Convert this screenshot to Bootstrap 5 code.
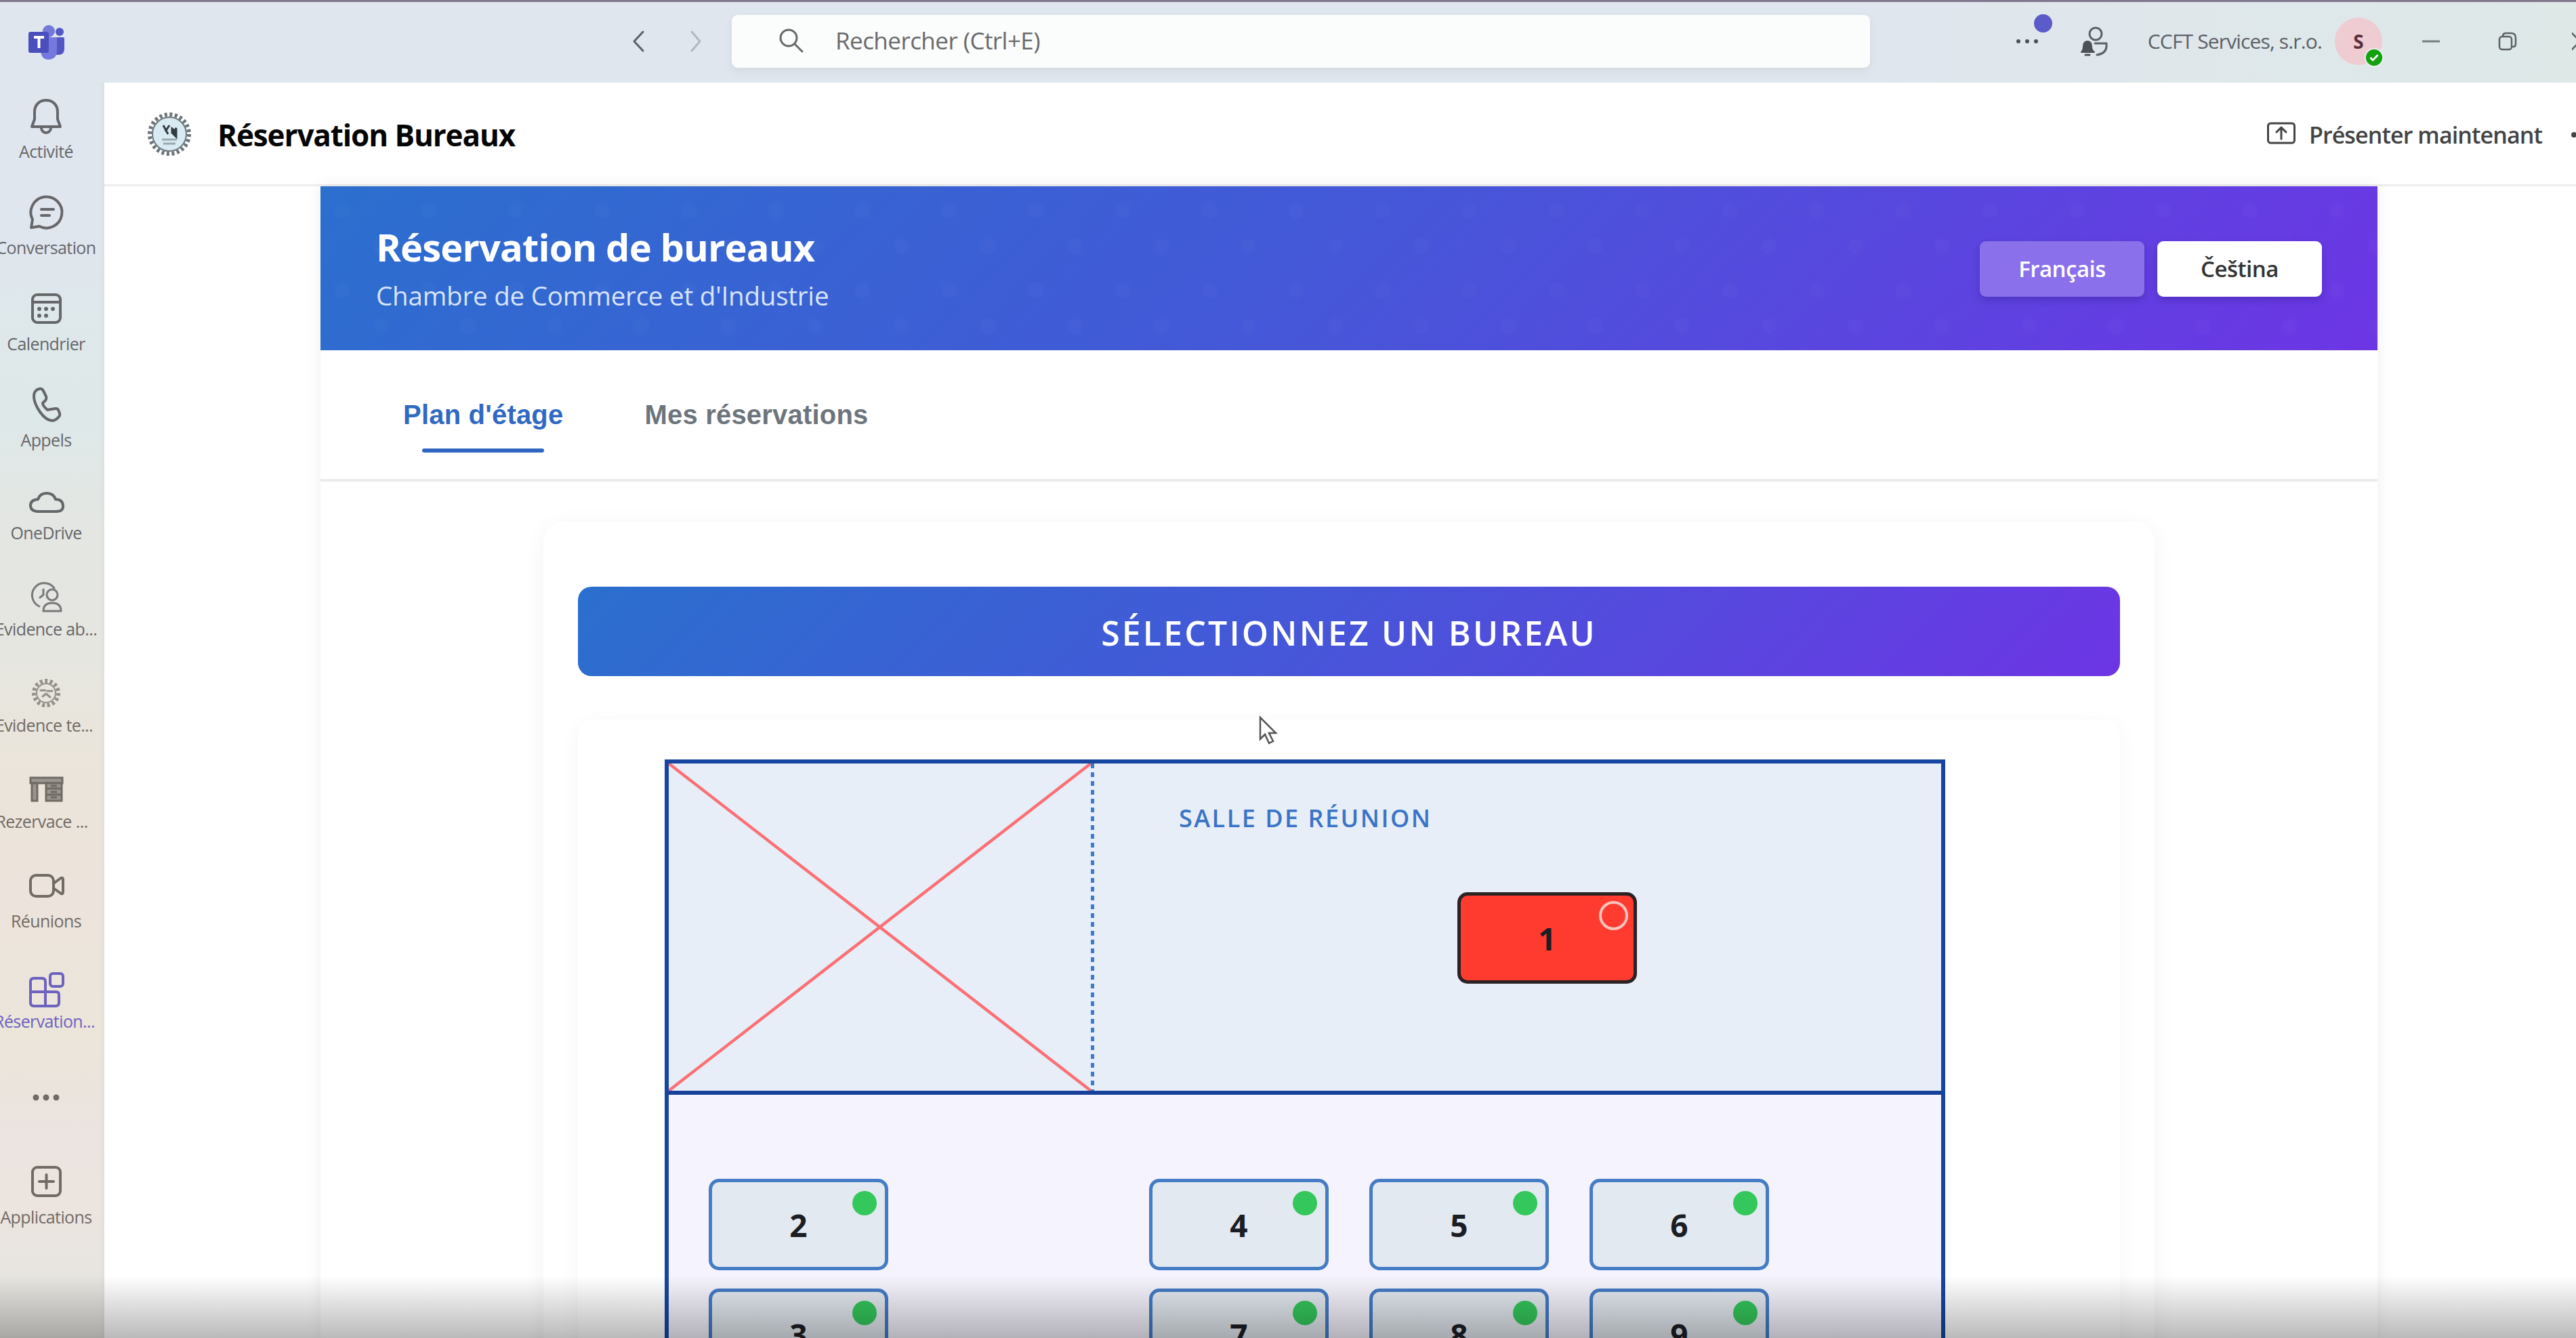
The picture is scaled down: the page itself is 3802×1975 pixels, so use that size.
<!DOCTYPE html>
<html lang="fr">
<head>
<meta charset="utf-8">
<meta name="viewport" content="width=device-width, initial-scale=1">
<title>Réservation Bureaux</title>
<link href="https://cdn.jsdelivr.net/npm/bootstrap@5.3.0/dist/css/bootstrap.min.css" rel="stylesheet">
<style>
body{font-family:"Open Sans","Noto Sans",sans-serif;color:#242424;background:#fff}
.shell{width:3802px;height:1975px}
svg{display:block;flex:none}
.ico{fill:none;stroke:currentColor;stroke-width:4;stroke-linecap:round;stroke-linejoin:round}
/* title bar */
.titlebar{height:122px;padding:0 0 4px 38px;border-top:3px solid #83798f;background:linear-gradient(90deg,#dfe6ee 0,#dfe6ee 70%,#dfe7eb 85%,#dde8e7 100%);color:#5c6066}
.searchbox{width:1680px;height:78px;margin-left:42px;padding-left:66px;border-radius:9px;background:#fbfcfc;box-shadow:0 5px 12px rgba(120,120,120,.12);color:#6a6a6a;font-size:35px;letter-spacing:-.55px}
.tenant{font-size:30px;letter-spacing:-.85px;white-space:nowrap}
.avatar-s{width:70px;height:70px;background:#eeccd2;color:#5a2f3a;font-size:28px;font-weight:700}
.presence{right:-2px;bottom:-3px}
.notif{width:27px;height:27px;background:#5b5bc9;left:27px;top:-36px}
/* app rail */
.rail{width:154px;padding-right:18px;background:linear-gradient(180deg,#dfe6ee 0,#dfe6ed 13%,#dee8ea 20%,#dfe8e8 28%,#e3e6e2 35%,#e6e6e0 46%,#ebe4da 55%,#ece4dc 66%,#ebe5da 76%,#ebe3df 83%,#ebe4df 90%,#e7e5e0 95%);color:#66676a;box-shadow:inset -4px 0 5px rgba(0,0,0,.025)}
.rail-item{height:142px;padding-top:19px}
.rail-item span{font-size:25px;line-height:30px;letter-spacing:-.6px;margin-top:7px;white-space:nowrap}
.rail-item.snug span{margin-top:2px}
.warm{color:#716b66}
.rail-item.current{color:#6d62c0;padding-top:31px;height:180px}
.rail-item.current span{margin:1px 5px 0 0}
.rail-more{height:80px}
.rail-item.apps{padding-top:54px;height:200px}
/* app header */
.apphead{height:153px;padding:4px 0 0 63px;border-bottom:3px solid #ededed}
.apphead h1{font-size:44px;font-weight:700;letter-spacing:-1.1px;margin:0 0 0 38px;color:#050505}
.present{font-size:34px;font-weight:600;letter-spacing:-.9px;color:#444;margin-left:19px;white-space:nowrap}
/* booking page */
.page{width:3036px;margin-left:319px;height:1700px;box-shadow:0 0 22px rgba(0,0,0,.07)}
.grad{background-image:linear-gradient(135deg,#2b6fce 0%,#4458d8 45%,#6d35e5 100%)}
.hero{height:242px;padding:0 82px 0 82px;background-image:radial-gradient(circle at 25% 30%,rgba(255,255,255,.02) 0 9px,transparent 14px),radial-gradient(circle at 70% 75%,rgba(255,255,255,.018) 0 9px,transparent 14px),linear-gradient(135deg,#2b6fce 0%,#4458d8 48%,#6d35e5 100%);background-size:128px 118px,128px 118px,auto}
.hero h2{font-size:56px;line-height:76px;font-weight:700;letter-spacing:-.87px;margin:0}
.hero p{font-size:38.5px;line-height:52px;letter-spacing:-.2px;margin:8px 0 0;color:#d8e4fa}
.langs{gap:19px;margin-top:2px}
.lang{width:243px;height:82px;border-radius:9px;border:0;font-size:33px;font-weight:600;letter-spacing:-.5px;padding:0;box-shadow:0 5px 12px rgba(20,10,80,.22)}
.lang-on,.lang-on:hover{background:#8a70ea;color:#fff}
.lang-off,.lang-off:hover{background:#fff;color:#333}
.tabsbar{height:194px;border-bottom:4px solid #e9ebed;padding:55px 0 0 122px;font-family:"Liberation Sans",Arial,sans-serif;font-size:40px;font-weight:700}
.tabsbar .tb{line-height:80px;height:102px;color:#6c757d;margin-right:120px;letter-spacing:.2px}
.tabsbar .tb.on{color:#3069c4}
.tb.on::after{content:"";display:block;width:180px;height:6px;margin:10px auto 0;border-radius:3px;background:#2f66c2}
.panel{width:2378px;margin:59px 0 0 329px;height:1400px;padding:96px 51px 0;border-radius:30px;box-shadow:0 6px 34px rgba(0,0,0,.05)}
.pick{height:132px;padding-top:4px;border-radius:20px;font-size:50px;font-weight:600;letter-spacing:3.15px}
.planwrap{margin-top:64px;height:1200px;border-radius:24px;padding:59px 0 0 128px;box-shadow:0 6px 30px rgba(0,0,0,.045)}
.plan{width:1890px;border:6px solid #1746a0;background:#f5f3fd;height:1100px}
.rooms{height:489px;background:#e7eef8;border-bottom:6px solid #16409a}
.void{width:623px}
.divider{width:5px;background:repeating-linear-gradient(180deg,#3d7cc9 0 7px,transparent 7px 13px)}
.meeting{padding:57px 0 0 125px}
.meeting h3{font-size:36px;line-height:48px;font-weight:600;letter-spacing:2.5px;color:#3a74c6;margin:0}
.seats{display:grid;grid-template-columns:repeat(5,265px);column-gap:60px;row-gap:27px;padding:124px 0 0 59px}
.seat{width:265px;height:135px;border:5px solid #447cc5;border-radius:15px;background:#e3e9f0;font-size:46px;font-weight:700;color:#1b1e25;line-height:1}
.seat i{position:absolute;width:36px;height:36px;border-radius:50%;background:#34c75b;right:12px;top:13px}
.seat.taken{background:#ff3b30;border-color:#2b2223;margin:85px 0 0 411px}
.seat.taken i{width:43px;height:43px;right:8px;top:8px;background:none;border:4px solid #ffc4bd}
.c3{grid-column:3}
.shade{left:0;right:0;bottom:0;height:92px;background:linear-gradient(180deg,rgba(0,0,0,0),rgba(0,0,0,.27));pointer-events:none}
.pointer{left:1858px;top:1056px}
</style>
<script src="https://cdn.jsdelivr.net/npm/bootstrap@5.3.0/dist/js/bootstrap.bundle.min.js"></script>
</head>
<body class="overflow-hidden">
<div class="shell d-flex flex-column position-relative overflow-hidden">

  <header class="titlebar d-flex align-items-center flex-shrink-0">
    <svg width="60" height="60" viewBox="0 0 60 60">
      <circle cx="34" cy="15" r="9" fill="#7478d8"/><circle cx="50" cy="16" r="6" fill="#5257c4"/>
      <path d="M42 24h13q2 0 2 2v15q0 9-9 9h-6z" fill="#5257c4"/>
      <path d="M22 24h24v20q0 12-12 13q-11 0-12-13z" fill="#7479dd"/>
      <rect x="4" y="16" width="30" height="31" rx="3" fill="#4a4fbc"/>
      <path d="M12 24h15M19.500 24v16" stroke="#fff" stroke-width="4" fill="none"/>
    </svg>
    <svg class="ico" width="114" height="60" viewBox="0 0 114 60" style="margin-left:826px"><path d="M25 16L12 30l13 14" stroke-width="3"/><path d="M97 16l12 14-12 14" stroke="#b1b8be" stroke-width="3"/></svg>
    <div class="searchbox d-flex align-items-center">
      <svg class="ico" width="46" height="44" viewBox="0 0 46 44"><circle cx="18" cy="17" r="12" stroke-width="3"/><path d="M27 26l11 11" stroke-width="3"/></svg>
      <span style="margin-left:41px">Rechercher (Ctrl+E)</span>
    </div>
    <div class="position-relative" style="margin-left:215px">
      <svg width="34" height="8" viewBox="0 0 34 8" fill="#4c5058"><circle cx="4" cy="4" r="3"/><circle cx="17" cy="4" r="3"/><circle cx="30" cy="4" r="3"/></svg>
      <div class="notif position-absolute rounded-circle"></div>
    </div>
    <svg class="ico" width="46" height="48" viewBox="0 0 46 48" style="margin-left:60px"><circle cx="24" cy="13" r="9" stroke-width="3"/><path d="M23 27h17v5q-1 10-14 12" stroke-width="3"/><path d="M3 40q3-3 3-8 0-8 6-8t6 8q0 5 4 8z" fill="#4c5058" stroke="#4c5058" stroke-width="2"/><path d="M9 44h6" stroke="#4c5058" stroke-width="3"/></svg>
    <span class="tenant" style="margin-left:55px">CCFT Services, s.r.o.</span>
    <div class="avatar-s position-relative rounded-circle d-flex align-items-center justify-content-center flex-shrink-0" style="margin-left:19px">S
      <svg class="presence position-absolute" width="28" height="28" viewBox="0 0 30 30"><circle cx="15" cy="15" r="14" fill="#13a10e" stroke="#eef2f2" stroke-width="2"/><path d="M9 15l4 4 8-8" fill="none" stroke="#fff" stroke-width="3"/></svg>
    </div>
    <svg width="26" height="30" viewBox="0 0 26 30" style="margin-left:59px"><path d="M0 15h26" stroke="#777b7f" stroke-width="3"/></svg>
    <svg class="ico" width="30" height="30" viewBox="0 0 30 30" style="margin-left:85px"><rect x="3" y="8" width="18" height="19" rx="4" stroke-width="2.500"/><path d="M8 7q0-4 5-4h7q7 0 7 7v9q0 4-4 4" stroke-width="2.500"/></svg>
    <svg class="ico" width="6" height="30" viewBox="0 0 6 30" style="margin-left:80px"><path d="M0 3l12 12L0 27" stroke-width="2.500"/></svg>
  </header>

  <div class="d-flex flex-grow-1">
    <nav class="rail d-flex flex-column flex-shrink-0">
      <div class="rail-item d-flex flex-column align-items-center">
        <svg class="ico" width="60" height="60" viewBox="0 0 60 60"><path d="M30 7C20 7 13 14 13 24v11L9 46h42l-4-11V24C47 14 40 7 30 7z"/><path d="M23 48a7 7 0 0 0 14 0"/></svg>
        <span>Activité</span></div>
      <div class="rail-item d-flex flex-column align-items-center">
        <svg class="ico" width="60" height="60" viewBox="0 0 60 60"><path d="M10 41A23 23 0 1 1 20 51L8 53z"/><path d="M23 26h18M23 35h12"/></svg>
        <span>Conversation</span></div>
      <div class="rail-item d-flex flex-column align-items-center">
        <svg class="ico" width="60" height="60" viewBox="0 0 60 60"><rect x="10" y="10" width="41" height="41" rx="7"/><path d="M10 21h41"/><g fill="currentColor" stroke="none"><circle cx="20" cy="31" r="3"/><circle cx="30" cy="31" r="3"/><circle cx="40" cy="31" r="3"/><circle cx="20" cy="41" r="3"/><circle cx="30" cy="41" r="3"/></g></svg>
        <span>Calendrier</span></div>
      <div class="rail-item d-flex flex-column align-items-center">
        <svg class="ico" width="60" height="60" viewBox="0 0 60 60"><path d="M17 8l3-1q4-1 6 3l4 8q1 4-1 6l-4 4q0 4 7 10l6-1 6-1q3 0 4 2l2 5q1 3-1 5-4 5-9 6-10 0-19-13T12 18q0-7 5-10z"/></svg>
        <span>Appels</span></div>
      <div class="rail-item snug d-flex flex-column align-items-center">
        <svg class="ico" width="60" height="60" viewBox="0 0 60 60"><path d="M17 46q-10-1-10-9t11-9q3-9 13-9t13 9q10 0 11 9t-10 9z"/></svg>
        <span>OneDrive</span></div>
      <div class="rail-item snug d-flex flex-column align-items-center">
        <svg class="ico" width="60" height="60" viewBox="0 0 60 60" opacity=".85"><path d="M42 17A18 18 0 1 0 20 44" stroke-width="3"/><path d="M26 19v8l-5 4" stroke-width="3"/><circle cx="39" cy="27" r="8" stroke-width="3"/><path d="M26 51q0-12 13-12t13 12z" stroke-width="3"/></svg>
        <span>Evidence ab...</span></div>
      <div class="rail-item snug warm d-flex flex-column align-items-center">
        <svg class="ico" width="60" height="60" viewBox="0 0 60 60" opacity=".7"><circle cx="30" cy="30" r="18" stroke-width="6" stroke-dasharray="4 3.500" stroke-linecap="butt"/><circle cx="30" cy="30" r="14" stroke-width="2"/><path d="M22 26h7M32 27h7M25 35l5-4 6 5" stroke-width="3"/></svg>
        <span style="margin-left:-6px">Evidence te...</span></div>
      <div class="rail-item snug warm d-flex flex-column align-items-center">
        <svg width="60" height="60" viewBox="0 0 60 60" fill="#9b958f" stroke="#706a65" stroke-width="3"><rect x="7" y="13" width="47" height="8"/><rect x="9" y="21" width="8" height="26"/><rect x="30" y="21" width="23" height="26"/><path d="M30 29h23M30 38h23M37 25h9M37 34h9M37 42h9"/></svg>
        <span style="margin-left:-13px">Rezervace ...</span></div>
      <div class="rail-item warm d-flex flex-column align-items-center">
        <svg class="ico" width="60" height="60" viewBox="0 0 60 60"><rect x="7" y="15" width="34" height="31" rx="8"/><path d="M41 27l11-8q3-1 3 2v19q0 3-3 2l-11-8"/></svg>
        <span>Réunions</span></div>
      <div class="rail-item current d-flex flex-column align-items-center">
        <svg class="ico" width="60" height="60" viewBox="0 0 60 60"><path d="M7 18q0-5 5-5h12q5 0 5 5v36H12q-5 0-5-5zM7 33h38q4 0 4 5v11q0 5-5 5H29"/><rect x="36" y="6" width="19" height="19" rx="4"/></svg>
        <span>Réservation...</span></div>
      <div class="rail-more warm d-flex align-items-center justify-content-center">
        <svg width="40" height="10" viewBox="0 0 40 10" fill="currentColor"><circle cx="5" cy="5" r="4.500"/><circle cx="20" cy="5" r="4.500"/><circle cx="35" cy="5" r="4.500"/></svg></div>
      <div class="rail-item apps warm d-flex flex-column align-items-center">
        <svg class="ico" width="60" height="60" viewBox="0 0 60 60"><rect x="10" y="9" width="41" height="42" rx="7"/><path d="M30.500 20v20M20 30h21"/></svg>
        <span>Applications</span></div>
    </nav>

    <main class="flex-grow-1">
      <div class="apphead d-flex align-items-center">
        <svg width="66" height="66" viewBox="0 0 66 66"><circle cx="33" cy="32" r="29" fill="none" stroke="#69757a" stroke-width="6" stroke-dasharray="4 3.600"/><circle cx="33" cy="32" r="25" fill="#d9ebf2" stroke="#69757a" stroke-width="2"/><path d="M24 19l7 13M33 19l-6 9M37 24l4 3 2-4v13l-6-6z" stroke="#333b40" stroke-width="3" fill="#333b40"/><path d="M22 40h22M24 46h18" stroke="#9aa9b0" stroke-width="3"/></svg>
        <h1>Réservation Bureaux</h1>
        <div class="ms-auto d-flex align-items-center">
          <svg class="ico" width="44" height="40" viewBox="0 0 44 40" color="#444"><rect x="2.500" y="3" width="39" height="29" rx="4" stroke-width="3"/><path d="M22 26V10M15 16l7-7 7 7" stroke-width="3"/></svg>
          <span class="present">Présenter maintenant</span>
          <svg width="8" height="10" viewBox="0 0 8 10" style="margin-left:42px"><circle cx="5" cy="5" r="4" fill="#444"/></svg>
        </div>
      </div>

      <div class="page">
        <section class="hero d-flex align-items-center justify-content-between text-white">
          <div style="margin-top:-4px"><h2>Réservation de bureaux</h2><p>Chambre de Commerce et d'Industrie</p></div>
          <div class="langs d-flex">
            <button class="btn lang lang-on">Français</button>
            <button class="btn lang lang-off">Čeština</button>
          </div>
        </section>
        <div class="tabsbar d-flex">
          <div class="tb on">Plan d'étage</div>
          <div class="tb">Mes réservations</div>
        </div>
        <section class="panel">
          <div class="pick grad text-white d-flex align-items-center justify-content-center">SÉLECTIONNEZ UN BUREAU</div>
          <div class="planwrap">
            <div class="plan">
              <div class="rooms d-flex">
                <svg class="void" height="483" viewBox="0 0 623 483" preserveAspectRatio="none"><path d="M0 0L623 483M623 0L0 483" stroke="#fb7074" stroke-width="4.500"/></svg>
                <div class="divider"></div>
                <div class="meeting">
                  <h3>SALLE DE RÉUNION</h3>
                  <div class="seat taken position-relative d-flex align-items-center justify-content-center">1<i></i></div>
                </div>
              </div>
              <div class="seats">
                <div class="seat position-relative d-flex align-items-center justify-content-center">2<i></i></div>
                <div class="seat c3 position-relative d-flex align-items-center justify-content-center">4<i></i></div>
                <div class="seat position-relative d-flex align-items-center justify-content-center">5<i></i></div>
                <div class="seat position-relative d-flex align-items-center justify-content-center">6<i></i></div>
                <div class="seat position-relative d-flex align-items-center justify-content-center">3<i></i></div>
                <div class="seat c3 position-relative d-flex align-items-center justify-content-center">7<i></i></div>
                <div class="seat position-relative d-flex align-items-center justify-content-center">8<i></i></div>
                <div class="seat position-relative d-flex align-items-center justify-content-center">9<i></i></div>
              </div>
            </div>
          </div>
        </section>
      </div>
    </main>
  </div>

  <svg class="pointer position-absolute" width="28" height="44" viewBox="0 0 28 44"><path d="M2 3v32l7-7 6 13 6-3-6-12h10z" fill="#fff" stroke="#555" stroke-width="2.500"/></svg>
  <div class="shade position-absolute"></div>
</div>
</body>
</html>
